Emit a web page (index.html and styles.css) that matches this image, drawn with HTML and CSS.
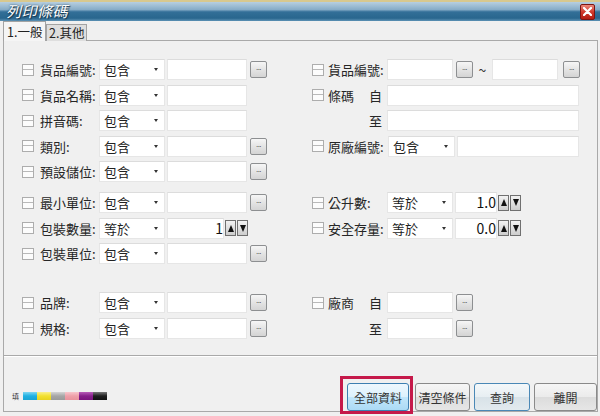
FILE: index.html
```html
<!DOCTYPE html>
<html lang="zh-Hant">
<head>
  <meta charset="UTF-8" />
  <title>列印條碼</title>
  <link rel="stylesheet" href="styles.css">
</head>
<body>

  <div class="titlebar">
    <span class="title">列印條碼</span>
    <span class="close">
      <svg width="9" height="9" viewBox="0 0 9 9"><path d="M1 1 L8 8 M8 1 L1 8" stroke="#fff" stroke-width="2.2" stroke-linecap="round"/></svg>
    </span>
  </div>

  <div class="tabs">
    <span class="tab active">1.一般</span>
    <span class="tab">2.其他</span>
  </div>

  <div class="frame">
    <div class="panel">
      <!-- row 1 -->
      <div class="cell">
        <span class="chk"></span><span class="label">貨品編號:</span>
        <span class="select">包含</span><span class="input"></span><span class="dots">...</span>
      </div>
      <div class="cell right">
        <span class="chk"></span><span class="label">貨品編號:</span>
        <span class="input w66 flush"></span><span class="dots">...</span>
        <span class="tilde">~</span>
        <span class="input w66 flush"></span><span class="dots far">...</span>
      </div>

      <!-- row 2 -->
      <div class="cell">
        <span class="chk"></span><span class="label">貨品名稱:</span>
        <span class="select">包含</span><span class="input"></span>
      </div>
      <div class="cell right">
        <span class="chk"></span><span class="label split"><span>條碼</span><span>自</span></span>
        <span class="input wide flush"></span>
      </div>

      <!-- row 3 -->
      <div class="cell">
        <span class="chk"></span><span class="label">拼音碼:</span>
        <span class="select">包含</span><span class="input"></span>
      </div>
      <div class="cell right">
        <span class="chk blank"></span><span class="label split"><span></span><span>至</span></span>
        <span class="input wide flush"></span>
      </div>

      <!-- row 4 -->
      <div class="cell">
        <span class="chk"></span><span class="label">類別:</span>
        <span class="select">包含</span><span class="input"></span><span class="dots">...</span>
      </div>
      <div class="cell right">
        <span class="chk"></span><span class="label">原廠編號:</span>
        <span class="select nudge">包含</span><span class="input w122"></span>
      </div>

      <!-- row 5 -->
      <div class="cell">
        <span class="chk"></span><span class="label">預設儲位:</span>
        <span class="select">包含</span><span class="input"></span><span class="dots">...</span>
      </div>
      <div class="cell right"></div>

      <!-- row 6 -->
      <div class="cell gap-s">
        <span class="chk"></span><span class="label">最小單位:</span>
        <span class="select">包含</span><span class="input"></span><span class="dots">...</span>
      </div>
      <div class="cell right gap-s">
        <span class="chk"></span><span class="label">公升數:</span>
        <span class="select">等於</span><span class="input num short">1.0</span>
        <span class="spin up"></span><span class="spin down"></span>
      </div>

      <!-- row 7 -->
      <div class="cell">
        <span class="chk"></span><span class="label">包裝數量:</span>
        <span class="select">等於</span><span class="input num">1</span>
        <span class="spin up"></span><span class="spin down"></span>
      </div>
      <div class="cell right">
        <span class="chk"></span><span class="label">安全存量:</span>
        <span class="select">等於</span><span class="input num short">0.0</span>
        <span class="spin up"></span><span class="spin down"></span>
      </div>

      <!-- row 8 -->
      <div class="cell">
        <span class="chk"></span><span class="label">包裝單位:</span>
        <span class="select">包含</span><span class="input"></span><span class="dots">...</span>
      </div>
      <div class="cell right"></div>

      <!-- row 9 -->
      <div class="cell gap-l">
        <span class="chk"></span><span class="label">品牌:</span>
        <span class="select">包含</span><span class="input"></span><span class="dots">...</span>
      </div>
      <div class="cell right gap-l">
        <span class="chk"></span><span class="label split"><span>廠商</span><span>自</span></span>
        <span class="input w66 flush"></span><span class="dots">...</span>
      </div>

      <!-- row 10 -->
      <div class="cell">
        <span class="chk"></span><span class="label">規格:</span>
        <span class="select">包含</span><span class="input"></span><span class="dots">...</span>
      </div>
      <div class="cell right">
        <span class="chk blank"></span><span class="label split"><span></span><span>至</span></span>
        <span class="input w66 flush"></span><span class="dots">...</span>
      </div>
    </div>

    <div class="footer">
      <div class="swatches">
        <span class="fill">填</span>
        <span class="sw cyan"></span>
        <span class="sw yellow"></span>
        <span class="sw gray"></span>
        <span class="sw pink"></span>
        <span class="sw purple"></span>
        <span class="sw black"></span>
      </div>
      <div class="actions">
        <span class="highlight"><button class="btn focus b1">全部資料</button></span>
        <button class="btn b2">清空條件</button>
        <button class="btn default b3">查詢</button>
        <button class="btn b4">離開</button>
      </div>
    </div>
  </div>

</body>
</html>
```

FILE: styles.css
```css
body {
  margin: 0;
  width: 600px;
  height: 416px;
  overflow: hidden;
  background: #f0f0f0;
  font-family: "Noto Sans CJK TC", "Noto Sans", sans-serif;
  font-size: 13px;
  color: #222;
}

/* title bar */
.titlebar {
  height: 19px;
  border-top: 2px solid #d8c88e;
  background: linear-gradient(#b7cfe0 0%, #87acc7 40%, #336f98 52%, #29668e 85%, #5d92b5 100%);
  display: flex;
  align-items: center;
  justify-content: space-between;
  padding: 0 5px 0 6px;
}

.title {
  color: #fff;
  font-style: italic;
  font-size: 15px;
  line-height: 1;
  margin-bottom: 3px;
  letter-spacing: 0.5px;
  text-shadow: 0 0 2px #16384f, 1px 1px 1px #16384f;
}

.close {
  width: 13px;
  height: 14px;
  display: flex;
  align-items: center;
  justify-content: center;
  border: 1px solid #7c1512;
  border-radius: 2px;
  background: linear-gradient(#ea8a7c, #d0392b 50%, #b41c12);
}

/* tabs */
.tabs {
  display: flex;
  align-items: flex-end;
  height: 20px;
  margin-left: 3px;
  margin-bottom: -1px;
}

.tab {
  box-sizing: border-box;
  height: 17px;
  width: 41px;
  padding-left: 2px;
  font-size: 12.5px;
  line-height: 16px;
  white-space: nowrap;
  overflow: hidden;
  border: 1px solid #a3a3a3;
  border-bottom: none;
  background: #dedede;
}

.tab.active {
  position: relative;
  height: 20px;
  width: 43px;
  padding-left: 3px;
  line-height: 20px;
  background: #f5f5f5;
}

/* frame + panel */
.frame {
  margin-left: 3px;
  width: 595px;
  box-sizing: border-box;
  border: 1px solid #a9a9a9;
  border-top: none;
}

.panel {
  height: 316px;
  box-sizing: border-box;
  border-top: 1px solid #a9a9a9;
  border-bottom: 1px solid #a9a9a9;
  box-shadow: 0 1px 0 #fff;
  padding: 16px 0 0 18px;
  display: grid;
  grid-template-columns: 290px 1fr;
  align-content: start;
}

.cell {
  display: flex;
  align-items: center;
  height: 25.5px;
}

.gap-s {
  margin-top: 5.5px;
}

.gap-l {
  margin-top: 23.5px;
}

.chk {
  width: 10px;
  height: 10px;
  margin-right: 6px;
  border: 1px solid #adadad;
  background: linear-gradient(#fcfcfc 4px, #b9b9b9 4px, #b9b9b9 5px, #fcfcfc 5px);
}

.right .chk {
  margin-right: 4px;
}

.chk.blank {
  visibility: hidden;
}

.label {
  width: 59px;
  white-space: nowrap;
  color: #262626;
}

.label.split {
  display: flex;
  justify-content: space-between;
  box-sizing: border-box;
  padding-right: 5px;
}

.select,
.input {
  box-sizing: border-box;
  height: 21px;
  background: #fff;
  border: 1px solid #e6e6e6;
  border-top-color: #dcdcdc;
}

.select {
  width: 66px;
  display: flex;
  align-items: center;
  justify-content: space-between;
  padding: 0 6px 0 4px;
  line-height: 1;
}

.select::after {
  content: "";
  border-top: 3px solid #333;
  border-left: 2.5px solid transparent;
  border-right: 2.5px solid transparent;
}

.select.nudge {
  width: 67px;
  margin-left: 1px;
}

.input {
  width: 80px;
  margin-left: 2px;
}

.input.flush {
  margin-left: 0;
}

.input.w66 {
  width: 66px;
}

.input.w122 {
  width: 122px;
}

.input.wide {
  width: 192px;
}

.input.num {
  width: 57px;
  text-align: right;
  font-size: 14px;
  line-height: 19px;
  padding-right: 0;
  color: #111;
}

.input.num.short {
  width: 42px;
}

.dots {
  box-sizing: border-box;
  width: 17px;
  height: 17px;
  margin-left: 3px;
  border: 1px solid #8d8f91;
  border-radius: 2px;
  background: linear-gradient(#f6f6f6, #e4e4e4 50%, #d4d4d4);
  font-family: "DejaVu Sans", sans-serif;
  font-size: 7px;
  line-height: 12px;
  text-align: center;
  color: #333;
  letter-spacing: -0.5px;
}

.dots.far {
  margin-left: 5px;
}

.tilde {
  width: 19px;
  text-align: center;
  font-size: 14px;
  color: #333;
}

.spin {
  box-sizing: border-box;
  width: 11px;
  height: 16px;
  margin-left: 1px;
  border: 1px solid #707070;
  background: linear-gradient(#f2f2f2, #cdcdcd);
  display: flex;
  align-items: center;
  justify-content: center;
}

.spin.up::after {
  content: "";
  border-bottom: 7px solid #111;
  border-left: 3.5px solid transparent;
  border-right: 3.5px solid transparent;
}

.spin.down::after {
  content: "";
  border-top: 7px solid #111;
  border-left: 3.5px solid transparent;
  border-right: 3.5px solid transparent;
}

/* footer */
.footer {
  height: 55px;
  display: flex;
  align-items: flex-end;
  justify-content: space-between;
}

.swatches {
  display: flex;
  align-items: center;
  margin: 0 0 10px 8px;
}

.fill {
  font-size: 7px;
  margin-right: 4px;
  color: #333;
}

.sw {
  width: 14px;
  height: 8px;
}

.cyan { background: linear-gradient(#7fd6f2, #1fb0e2 50%, #1aa3d3); }
.yellow { background: linear-gradient(#fbf08a, #f2e02e 50%, #e8d21e); }
.gray { background: linear-gradient(#d4d4d4, #a6a6a6 50%, #9a9a9a); }
.pink { background: linear-gradient(#f8c6cc, #eea0a9 50%, #e8939c); }
.purple { background: linear-gradient(#b85cb8, #86208a 50%, #7a157e); }
.black { background: linear-gradient(#777, #1e1e1e 50%, #111); }

.actions {
  display: flex;
  align-items: flex-end;
  gap: 4px;
}

.highlight {
  display: flex;
  border: 3px solid #c5194a;
  padding: 4px 1px 0 4px;
  margin-bottom: -3px;
  margin-right: -2px;
}

.btn {
  box-sizing: border-box;
  height: 28px;
  padding: 0;
  font-family: inherit;
  font-size: 12px;
  color: #333;
  border: 1px solid #8a8a8a;
  border-radius: 3px;
  background: linear-gradient(#f6f6f6, #ebebeb 50%, #dcdcdc 51%, #e6e6e6);
}

.btn.focus {
  border-color: #3c7fb1;
  background: linear-gradient(#eef8fe, #dcf1fc 50%, #c2e6fa 51%, #abdaf5);
}

.btn.default {
  border-color: #4a88b6;
  background: linear-gradient(#f4f8fa, #e7eef2 50%, #d8e2e8 51%, #e2eaee);
}

.b1 { width: 62px; }
.b2 { width: 55px; }
.b3 { width: 56px; }
.b4 { width: 63px; }
```
